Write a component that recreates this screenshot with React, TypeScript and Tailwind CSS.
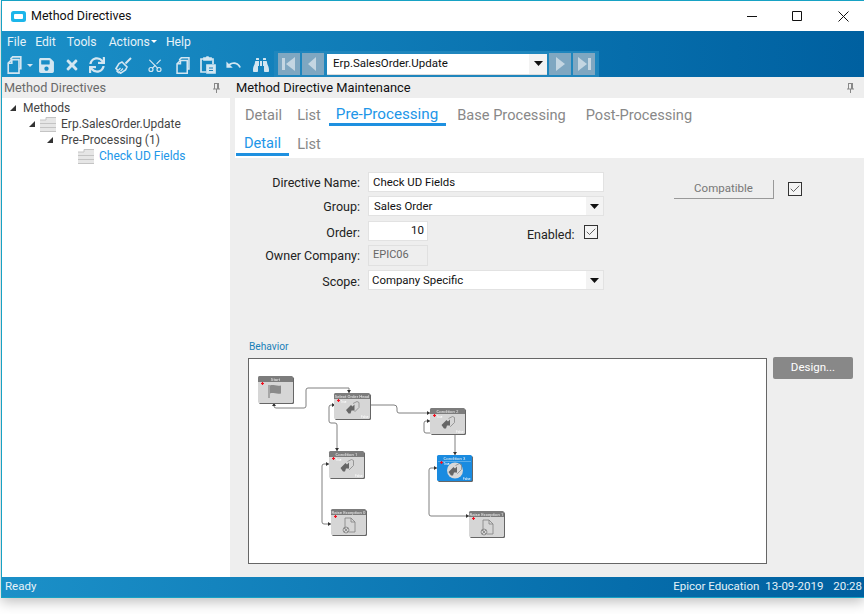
import { FaSave, FaTimes, FaSync, FaBinoculars } from "react-icons/fa";
import { MdUndo } from "react-icons/md";
import { LuScissors, LuCheck } from "react-icons/lu";

const font = "font-['Roboto','Liberation_Sans',sans-serif]";

const Pin = () => (
  <svg width="9" height="10" viewBox="0 0 9 10" className="text-[#888]">
    <path d="M2 .5h5M2.500 .5v5.500M6.500 .5v5.500M1 6h7M4.500 6v4M5.500 1v5" stroke="currentColor" fill="none" />
  </svg>
);

const Folder = () => (
  <svg width="16" height="15" viewBox="0 0 16 15">
    <path d="M0 3h6V0h10v15H0z" fill="#e6e6e6" />
    <path d="M0 3h6V.5h10M0 6.500h16M0 10.500h16M0 14.500h16" stroke="#c4c4c4" fill="none" />
  </svg>
);

const Expander = () => (
  <svg width="6" height="6" viewBox="0 0 6 6"><path d="M6 0v6H0z" fill="#333" /></svg>
);

const Caret = () => (
  <svg width="9" height="5" viewBox="0 0 9 5"><path d="M0 0h9L4.500 5z" fill="#111" /></svg>
);

// outlined page with a folded corner, used for New and Copy
const PageStack = ({ w, h }: { w: number; h: number }) => (
  <svg width={w} height={h} viewBox="0 0 16 20" fill="none" stroke="currentColor" strokeWidth="1.800">
    <path d="M4 4V3l2-2h9v13h-2" />
    <path d="M1 19V8l4-4h8v15z" />
    <path d="M5 4v4H1" />
  </svg>
);

const Paste = () => (
  <svg width="16" height="18" viewBox="0 0 16 18" fill="none" stroke="currentColor" strokeWidth="1.700">
    <path d="M6 16H1V3h3M10 3h3v5" />
    <path d="M4 4V2h2l1-1h1l1 1h2v2z" fill="currentColor" />
    <path d="M7 9h8v8H7z" fill="currentColor" />
    <path d="M9 12h4M9 14.500h4" stroke="#1a80b8" strokeWidth="1" />
  </svg>
);

const Broom = () => (
  <svg width="17" height="17" viewBox="0 0 17 17" fill="none" stroke="currentColor" strokeWidth="1.600">
    <path d="M16 1l-5.500 5.500" strokeWidth="2" />
    <path d="M7 5l5 5-1.500 3-5 3.300-1-1.300-1 .5L2 14l.5-1L1 11.500l3-5z" />
    <path d="M5.500 11l-2.500 2.500M8 11.500L5.500 14" strokeWidth="1.200" />
  </svg>
);

const NavButton = ({ dir, end }: { dir: "l" | "r"; end?: boolean }) => (
  <div className="w-[22px] h-[22px] bg-[#7fa7c1] flex items-center justify-center">
    <svg width="14" height="14" viewBox="0 0 14 14" fill="#c4d6e2">
      {dir === "l" ? (
        <>
          {end && <rect x="0" y="1" width="3" height="12" />}
          <path d={end ? "M13 0v14L4 7z" : "M10 0v14L2 7z"} />
        </>
      ) : (
        <>
          <path d={end ? "M1 0v14l9-7z" : "M3 0v14l9-7z"} />
          {end && <rect x="11" y="1" width="3" height="12" />}
        </>
      )}
    </svg>
  </div>
);

const Checkbox = () => (
  <div className="w-[14px] h-[14px] border border-[#333] bg-[#f4f4f4] flex items-center justify-center">
    <LuCheck size={12} strokeWidth={1.5} className="text-[#333]" />
  </div>
);

const Row = ({ label, children, h, pt = "pt-[2px]" }: { label: string; children: React.ReactNode; h: string; pt?: string }) => (
  <div className={`flex items-center ${h}`}>
    <div className={`w-[133px] text-right pr-[8px] ${pt} text-[12.5px] text-[#222] shrink-0`}>{label}</div>
    {children}
  </div>
);

const SelectBox = ({ value, pad }: { value: string; pad: string }) => (
  <div className="w-[236px] h-full bg-white border border-[#e2e2e2] flex items-center text-[11.4px] text-[#111]">
    <span className={`flex-1 pt-[1px] ${pad}`}>{value}</span>
    <div className="w-[17px] h-full bg-[#f3f3f3] flex items-center justify-center"><Caret /></div>
  </div>
);

const diagramNodes = [
  { x: 10, y: 18, w: 35, h: 27, title: "Start", kind: "flag" },
  { x: 86, y: 35, w: 36, h: 26, title: "Select Order Head", kind: "cond" },
  { x: 81, y: 93, w: 35, h: 27, title: "Condition 1", kind: "cond" },
  { x: 83, y: 151, w: 35, h: 26, title: "Raise Exception 0", kind: "doc" },
  { x: 182, y: 50, w: 35, h: 26, title: "Condition 2", kind: "cond" },
  { x: 189, y: 97, w: 35, h: 26, title: "Condition 3", kind: "active" },
  { x: 221, y: 153, w: 35, h: 26, title: "Raise Exception 1", kind: "doc" },
];

const wires = [
  "M26 45v3q0 2 2 2h28q2 0 2-2V32q0-2 2-2h41v5",
  "M122 47h24q3 0 3 3v3q0 2 2 2h31",
  "M87 47h-4q-2 0-2 2v14q0 2 2 2h4q2 0 2 2v26",
  "M81 106h-5q-2 0-2 2v56q0 2 2 2h7",
  "M182 63h-4q-2 0-2 2v8q0 2 2 2h27q2 0 2 2v20",
  "M189 110h-6q-2 0-2 2v44q0 2 2 2h38",
];

const heads = [
  [101, 35, "d"], [26, 45, "u"], [182, 55, "r"], [122, 47, "r"], [87, 47, "r"], [89, 93, "d"],
  [81, 106, "l"], [83, 166, "r"], [182, 63, "r"], [207, 97, "d"], [189, 110, "r"], [221, 158, "r"],
] as const;

const Diagram = () => (
  <svg width="517" height="204" viewBox="1 1 517 204" className="block blur-[0.4px]">
    {wires.map((d) => (
      <path key={d} d={d} fill="none" stroke="#808080" strokeWidth="1" />
    ))}
    {heads.map(([x, y, dir], i) => (
      <path
        key={i}
        d={
          dir === "d"
            ? `M${x - 2} ${y - 3}h4l-2 3z`
            : dir === "u"
            ? `M${x - 2} ${y + 3}h4l-2-3z`
            : `M${x - 3} ${y - 2}v4l3-2z`
        }
        fill="#333"
      />
    ))}
    {diagramNodes.map((n) => {
      const active = n.kind === "active";
      return (
        <g key={n.title} transform={`translate(${n.x} ${n.y})`}>
          <rect x="1" y="1" width={n.w} height={n.h} rx="1.500" fill="#666" />
          <rect width={n.w} height={n.h} rx="1.500" fill={active ? "#1a8be0" : "#d6d6d6"} />
          {!active && <path d={`M0 6V1.500Q0 0 1.500 0h${n.w - 3}Q${n.w} 0 ${n.w} 1.500V6z`} fill="#7c7c7c" />}
          {active && <path d={`M1 6.500h${n.w - 2}`} stroke="#bfe0f7" strokeWidth="0.4" />}
          <text x={n.w / 2} y="4.500" textAnchor="middle" fontSize="4.300" fill="#eee">{n.title}</text>
          <path d="M3 7.500h3M4.500 6v3" stroke="#f01020" strokeWidth="1.200" />
          {n.kind === "flag" && (
            <g>
              <path d="M11 9v13" stroke="#777" strokeWidth="1" />
              <path d="M12 9.500c3-1.500 6 1 11 0v8c-5 1-8-1.500-11 0z" fill="#8a8a8a" />
            </g>
          )}
          {active && <circle cx={n.w / 2 + 0.5} cy="15.500" r="8" fill="#d8d8d8" />}
          {(n.kind === "cond" || active) && (
            <g>
              <path d={`M${n.w / 2 - 6} 17l5-5 1.500 1.500 2-2v6h-3l-1 3h-2z`} fill="#666" />
              <path d={`M${n.w / 2 + 1} 10.500l4-2 2 1v5l-4 4-1-1`} fill="none" stroke="#888" strokeWidth="0.8" />
              <text x={n.w - 1.500} y={n.h - 1.500} textAnchor="end" fontSize="3.200" fill="#fff">False</text>
              <text x="6.500" y="9.500" fontSize="3" fill="#fff">True</text>
            </g>
          )}
          {n.kind === "doc" && (
            <g fill="none" stroke="#808080" strokeWidth="0.8">
              <path d="M14 20v-11h6l4 4v10h-6" />
              <path d="M20 9v4h4" />
              <circle cx="15" cy="21" r="3" />
              <path d="M13 19l4 4M17 19l-4 4" />
            </g>
          )}
        </g>
      );
    })}
  </svg>
);

export default function App() {
  return (
    <div className={`${font} w-[864px] h-[614px] bg-white overflow-hidden relative`}>
      <div className="h-[598px] ml-[1px] border-t border-l border-[#17a2c4] flex flex-col bg-[#eeeeee] shadow-[0_4px_12px_rgba(0,0,0,0.25)]">
        {/* title bar */}
        <div className="h-[30px] bg-white flex items-center pl-[9px] shrink-0">
          <svg width="15" height="11" viewBox="0 0 15 11">
            <rect width="15" height="11" rx="2.500" fill="#1cb6ea" />
            <rect x="3" y="3" width="9" height="5" rx="1" fill="#fff" />
          </svg>
          <span className="ml-[5px] text-[12.5px] text-[#111]">Method Directives</span>
          <div className="ml-auto flex items-center text-[#111] pr-[15px]">
            <svg width="11" height="11" viewBox="0 0 11 11" fill="none" stroke="currentColor"><path d="M0 5.500h10" /></svg>
            <svg width="11" height="11" viewBox="0 0 11 11" fill="none" stroke="currentColor" className="ml-[34px]"><path d="M.5 .5h9v9h-9z" /></svg>
            <svg width="11" height="11" viewBox="0 0 11 11" fill="none" stroke="currentColor" className="ml-[35px]"><path d="M.5 .5l10 10M10.500 .5l-10 10" /></svg>
          </div>
        </div>

        {/* menu + toolbar */}
        <div className="h-[46px] shrink-0 bg-gradient-to-r from-[#1b90c8] to-[#0060a0] text-white">
          <div className="h-[22px] flex items-center pl-[5px] gap-[9px] text-[12.2px] text-[#e6f2f8]">
            <span>File</span>
            <span>Edit</span>
            <span className="ml-[2px]">Tools</span>
            <span className="flex items-center ml-[3px] gap-[1px]">
              Actions
              <svg width="6" height="3" viewBox="0 0 6 3"><path d="M0 0h6L3 3z" fill="#fff" /></svg>
            </span>
            <span>Help</span>
          </div>
          <div className="h-[24px] flex items-center pl-[4px] text-[#d3e6f1]">
            <div className="w-[16px] flex justify-center"><PageStack w={15} h={18} /></div>
            <svg width="6" height="3" viewBox="0 0 6 3" className="ml-[5px]"><path d="M0 0h6L3 3z" fill="#d3e6f1" /></svg>
            <div className="ml-[5px] w-[17px] flex justify-center"><FaSave size={17} /></div>
            <div className="ml-[9px] w-[16px] flex justify-center"><FaTimes size={16} /></div>
            <div className="ml-[9px] w-[16px] flex justify-center"><FaSync size={16} /></div>
            <div className="ml-[10px] w-[17px] flex justify-center"><Broom /></div>
            <div className="ml-[15px] w-[16px] flex justify-center"><LuScissors size={17} strokeWidth={1.800} className="-rotate-90" /></div>
            <div className="ml-[12px] w-[15px] flex justify-center"><PageStack w={14} h={17} /></div>
            <div className="ml-[10px] w-[16px] flex justify-center"><Paste /></div>
            <div className="ml-[9px] w-[17px] flex justify-center"><MdUndo size={20} /></div>
            <div className="ml-[10px] w-[17px] flex justify-center"><FaBinoculars size={16} /></div>
            <div className="ml-[5px] h-[26px] mb-[2px] flex items-center gap-[2px] px-[4px] bg-[#1f86bd]">
              <NavButton dir="l" end />
              <NavButton dir="l" />
              <div className="ml-[1px] w-[220px] h-[21px] bg-white border-b border-[#ddd] flex items-center text-[11.500px] text-[#111]">
                <span className="flex-1 pl-[6px] pt-[1px]">Erp.SalesOrder.Update</span>
                <div className="w-[18px] h-full bg-[#f3f3f3] flex items-center justify-center"><Caret /></div>
              </div>
              <NavButton dir="r" />
              <NavButton dir="r" end />
            </div>
          </div>
        </div>

        {/* panels */}
        <div className="flex-1 flex min-h-0">
          <div className="w-[228px] shrink-0 flex flex-col">
            <div className="h-[21px] flex items-center justify-between pl-[2px] pr-[9px] text-[12.7px] text-[#6a6a6a]">
              <span>Method Directives</span>
              <Pin />
            </div>
            <div className="flex-1 bg-white text-[12px] pt-[2px] text-[#444]">
              <div className="h-[16px] flex items-center pl-[8px]"><Expander /><span className="ml-[7px]">Methods</span></div>
              <div className="h-[16px] flex items-center pl-[27px]"><Expander /><span className="ml-[5px]"><Folder /></span><span className="ml-[5px]">Erp.SalesOrder.Update</span></div>
              <div className="h-[16px] flex items-center pl-[45px]"><Expander /><span className="ml-[8px]">Pre-Processing (1)</span></div>
              <div className="h-[16px] flex items-center pl-[76px]"><Folder /><span className="ml-[5px] text-[#2196e8]">Check UD Fields</span></div>
            </div>
          </div>

          <div className="flex-1 flex flex-col ml-[5px] min-w-0">
            <div className="h-[21px] flex items-center justify-between pl-[1px] pr-[9px] text-[12.9px] text-[#111]">
              <span>Method Directive Maintenance</span>
              <Pin />
            </div>
            <div className="bg-white h-[60px] shrink-0 text-[14.6px] text-[#888]">
              <div className="h-[28px] flex items-end leading-[22px]">
                <span className="ml-[10px]">Detail</span>
                <span className="ml-[15px]">List</span>
                <span className="ml-[8px] pl-[7px] pr-[8px] leading-[18px] text-[15.2px] border-b-[3px] border-[#1e90e0] text-[#2196e8]">Pre-Processing</span>
                <span className="ml-[11px]">Base Processing</span>
                <span className="ml-[20px]">Post-Processing</span>
              </div>
              <div className="h-[30px] flex items-end leading-[24px]">
                <span className="ml-[1px] px-[8px] leading-[20px] border-b-[3px] border-[#1e90e0] text-[#2196e8]">Detail</span>
                <span className="ml-[8px]">List</span>
              </div>
            </div>

            <div className="flex-1 flex flex-col relative">
              <div className="flex pt-[14px] h-[183px] shrink-0">
                <div className="w-[370px] shrink-0 flex flex-col gap-[4px]">
                  <Row label="Directive Name:" h="h-[20px]">
                    <div className="w-[236px] h-full bg-white border border-[#e2e2e2] flex items-center pl-[4px] pt-[1px] text-[11.4px] text-[#111]">Check UD Fields</div>
                  </Row>
                  <Row label="Group:" h="h-[20px]"><SelectBox value="Sales Order" pad="pl-[5px]" /></Row>
                  <div className="flex items-center h-[20px] mt-[1px]">
                    <div className="w-[133px] text-right pr-[8px] pt-[4px] text-[12.500px] text-[#222] shrink-0">Order:</div>
                    <div className="w-[60px] h-full bg-white border border-[#e2e2e2] flex items-center justify-end pr-[3px] text-[11.500px] text-[#111]">10</div>
                    <span className="ml-[99px] mt-[8px] text-[12.500px] text-[#222]">Enabled:</span>
                    <span className="ml-[9px] mt-[2px]"><Checkbox /></span>
                  </div>
                  <Row label="Owner Company:" h="h-[21px]">
                    <div className="w-[60px] h-full bg-[#eeeeee] border border-[#e0e0e0] flex items-center pl-[4px] text-[11px] text-[#666]">EPIC06</div>
                  </Row>
                  <Row label="Scope:" h="h-[20px]" pt="pt-[4px]"><SelectBox value="Company Specific" pad="pl-[3px]" /></Row>
                </div>
                <div className="ml-[69px] mt-[8px] flex items-start">
                  <div className="w-[100px] h-[19px] border-b border-r border-[#999] flex items-center justify-center text-[11.500px] text-[#777]">Compatible</div>
                  <span className="ml-[14px] mt-[2px]"><Checkbox /></span>
                </div>
              </div>
              <div className="pl-[14px] text-[10.2px] text-[#1a80b8] h-[17px] leading-[12px]">Behavior</div>
              <div className="flex pl-[13px] items-start">
                <div className="w-[519px] h-[206px] bg-white border border-[#666]">
                  <Diagram />
                </div>
                <div className="ml-[6px] -mt-[1px] w-[80px] h-[22px] bg-[#888] rounded-[2px] flex items-center justify-center text-[11.500px] text-white">Design...</div>
              </div>
            </div>
          </div>
        </div>

        {/* status bar */}
        <div className="h-[21px] shrink-0 bg-gradient-to-r from-[#1b90c8] to-[#0060a0] border-b border-[#17a2c4] flex items-center pl-[3px] pr-[2px] text-[11.500px] text-[#e6f2f8]">
          <span>Ready</span>
          <span className="ml-auto">Epicor Education</span>
          <span className="ml-[6px]">13-09-2019</span>
          <span className="ml-[10px]">20:28</span>
        </div>
      </div>
    </div>
  );
}
